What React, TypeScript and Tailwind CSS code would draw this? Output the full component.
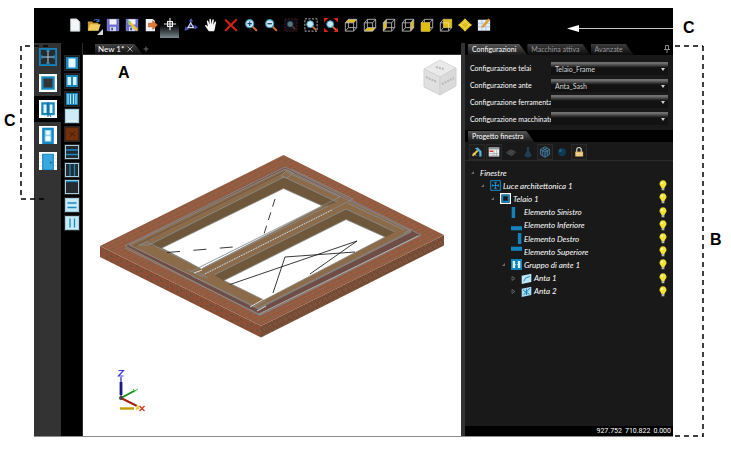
import React from "react";

type Kids = { children: React.ReactNode };

const Pic = ({ children, big = false }: Kids & { big?: boolean }) => (
  <svg viewBox="0 0 16 16" className={big ? "size-[18px]" : "size-[14px]"} aria-hidden="true">
    {children}
  </svg>
);

/* ---------- main toolbar drawings ---------- */

const Lens = () => (
  <>
    <path d="M9 9l5 5" stroke="#d9662a" strokeWidth="2.4" strokeLinecap="round" />
    <circle cx="6.5" cy="6.5" r="4.6" fill="#c4e9f7" stroke="#3d93b8" strokeWidth="1.3" />
  </>
);

const Floppy = () => (
  <>
    <path d="M1.500 1.500h13v13h-13z" fill="#6a6ad0" stroke="#8f8fe6" />
    <path d="M4 1.500h8v6H4z" fill="#f2f4fb" />
    <path d="M4.500 10h7v5h-7z" fill="#cfd4e8" />
    <path d="M6 11h2v3H6z" fill="#4a4aa8" />
  </>
);

const CubeLines = ({ children }: Kids) => (
  <>
    {children}
    <path
      d="M1.500 5.500h9.500v9.500H1.500zM5 1.500h9.500v9.500M5 1.500v9.500h9.500M1.500 5.500L5 1.500M11 5.500l3.500-4M11 15l3.500-4M1.500 15L5 11"
      fill="none"
      stroke="#b9b9b9"
      strokeWidth="1"
    />
  </>
);

const fileTools = [
  { name: "Nuovo", art: <path d="M3 1h7l3.500 3.500V15H3z" fill="#f4f6f8" stroke="#c3c8cc" /> },
  {
    name: "Apri",
    art: (
      <>
        <path d="M1 4h5l1 1.500h6V14H1z" fill="#c99a2c" />
        <path d="M3.500 7h12L13 14.500H1z" fill="#f3cf62" />
        <path d="M8 3c2-2 4-1.500 5 .5M13.500 1v3h-3" fill="none" stroke="#3c6fb5" strokeWidth="1.400" />
      </>
    ),
  },
  { name: "Salva", art: <Floppy /> },
  {
    name: "Salva con nome",
    art: (
      <>
        <Floppy />
        <path d="M5 5l9 9" stroke="#e8c52e" strokeWidth="3" />
        <path d="M3.500 3.500l2 2" stroke="#7fc77a" strokeWidth="3" />
      </>
    ),
  },
  {
    name: "Esporta",
    art: (
      <>
        <path d="M2 1h8l2.500 2.500V15H2z" fill="#eef1f5" />
        <path d="M5 6h5V3l5.500 5-5.500 5v-3H5z" fill="#e07a2f" stroke="#b9511a" strokeWidth=".7" />
      </>
    ),
  },
  {
    name: "Snap",
    art: (
      <g fill="none" stroke="#f0f0f0" strokeWidth="1.300">
        <path d="M8 1v14M1 8h14" />
        <rect x="5.200" y="5.200" width="5.600" height="5.600" />
      </g>
    ),
  },
];

const viewTools = [
  {
    name: "Orbita",
    art: (
      <>
        <path d="M8 8V2M8 8l-5 4.500M8 8l6 2" stroke="#3a3f96" strokeWidth="2" />
        <path d="M8 0l2.500 4h-5zM.5 14.500l1-5 4 3.500zM16 11l-4 2 .5-5z" fill="#4b51b5" />
        <path d="M7.500 5.500L11 11H4.500z" fill="none" stroke="#d8dcee" strokeWidth="1.300" />
      </>
    ),
  },
  {
    name: "Sposta vista",
    art: (
      <path
        d="M5.500 15L1.500 9.500c-.8-1.300.7-2 1.600-1L4.500 10 3.300 4c-.2-1.400 1.300-1.600 1.700-.3L6.300 7.500 6.200 2c0-1.400 1.700-1.400 1.800 0l.4 5.300L9.500 2.300c.3-1.300 1.900-1 1.700.4l-.6 5.200 1.700-3.200c.7-1.200 2-.5 1.500.8C12.700 8.500 13 12 11.500 15z"
        fill="#f7f7f7"
      />
    ),
  },
  { name: "Elimina", art: <path d="M2 2.500L14 14M14 2L2 14" stroke="#d8220f" strokeWidth="2.300" strokeLinecap="round" /> },
  {
    name: "Ingrandisci",
    art: (
      <>
        <Lens />
        <path d="M4 6.500h5M6.500 4v5" stroke="#1a4766" strokeWidth="1.300" />
      </>
    ),
  },
  {
    name: "Riduci",
    art: (
      <>
        <Lens />
        <path d="M4 6.500h5" stroke="#1a4766" strokeWidth="1.500" />
      </>
    ),
  },
  {
    name: "Zoom selezione",
    art: (
      <g opacity=".5">
        <rect x="1" y="1" width="14" height="14" fill="#141c33" stroke="#c03030" strokeDasharray="2 1.500" />
        <g transform="translate(2.500 2.500) scale(.7)">
          <Lens />
        </g>
      </g>
    ),
  },
  {
    name: "Zoom finestra",
    art: (
      <>
        <rect x="1" y="1" width="14" height="14" fill="none" stroke="#c9c9c9" strokeDasharray="2.500 1.500" />
        <g transform="translate(1.500 1.500) scale(.85)">
          <Lens />
        </g>
      </>
    ),
  },
  {
    name: "Adatta",
    art: (
      <>
        <path d="M0 0h5L0 5zM16 0v5l-5-5zM0 16v-5l5 5zM16 16h-5l5-5z" fill="#e3200f" />
        <g transform="translate(1.500 1.500) scale(.85)">
          <Lens />
        </g>
      </>
    ),
  },
];

const solidTools = [
  { name: "Vista alto", art: <CubeLines><path d="M1.500 5.500L5 1.500h9.500L11 5.500z" fill="#e0bd12" /></CubeLines> },
  { name: "Vista basso", art: <CubeLines><path d="M1.500 15L5 11h9.500L11 15z" fill="#e0bd12" /></CubeLines> },
  { name: "Vista sinistra", art: <CubeLines><path d="M1.500 5.500L5 1.500V11l-3.500 4z" fill="#e0bd12" /></CubeLines> },
  { name: "Vista destra", art: <CubeLines><path d="M11 5.500l3.500-4V11L11 15z" fill="#e0bd12" /></CubeLines> },
  {
    name: "Vista frontale",
    art: (
      <>
        <CubeLines><path d="M0 0" /></CubeLines>
        <path d="M1 5h10.500v10.500H1z" fill="#e0bd12" />
      </>
    ),
  },
  {
    name: "Vista retro",
    art: (
      <>
        <CubeLines><path d="M0 0" /></CubeLines>
        <path d="M5 1.500h9.500V11H5z" fill="#e0bd12" />
        <path d="M5 5.500h6V11" fill="none" stroke="#e9dfa8" />
      </>
    ),
  },
  {
    name: "Assonometria",
    art: (
      <>
        <path d="M8 .5L15.800 8 8 15.500.2 8z" fill="#e0bd12" />
        <path d="M8 4l4.500 4L8 12 3.500 8zM8 1v3M8 12v3M.5 8h3M12.500 8h3" fill="none" stroke="#f6e488" />
      </>
    ),
  },
  {
    name: "Disegno",
    art: (
      <>
        <path d="M1 2h14v12.500H1z" fill="#e6eff7" />
        <path d="M1 6h14M1 10h14M5.500 2v12M10 2v12" stroke="#a9c6dd" />
        <path d="M6 10.500L14 1.500" stroke="#e39b2d" strokeWidth="2.600" />
      </>
    ),
  },
];

/* ---------- object palette drawings ---------- */

const palette = [
  {
    name: "Luce architettonica",
    art: (
      <>
        <rect x=".8" y=".8" width="14.400" height="14.400" fill="#262b30" stroke="#1584bd" strokeWidth="1.600" />
        <path d="M8 2.500v11M2.500 8h11" stroke="#9fd0ea" strokeWidth=".9" />
        <path d="M6.500 2.500h3M6.500 13.500h3M2.500 6.500v3M13.500 6.500v3" stroke="#2b9bd3" />
      </>
    ),
  },
  {
    name: "Telaio",
    art: (
      <>
        <rect width="16" height="16" fill="#fff" />
        <rect x="3" y="3" width="10" height="10" fill="#333" stroke="#1788c2" strokeWidth="2" />
      </>
    ),
  },
  {
    name: "Ante",
    art: (
      <>
        <rect width="16" height="16" fill="#fff" />
        <path d="M2 2h12v11.500H2z" fill="#1788c2" />
        <path d="M4 4h2.700v7.500H4zM9.500 4H12v7.500H9.500z" fill="#e4f4fb" />
        <path d="M8 2v13M9.500 13l1 2" stroke="#0e5f8a" strokeWidth=".9" />
      </>
    ),
  },
  {
    name: "Porta vetrata",
    art: (
      <>
        <rect width="16" height="16" fill="#fff" />
        <path d="M2.800 1.500h10.400V16H2.800z" fill="#1788c2" />
        <path d="M5 3.500h6V14H5z" fill="#8fd0ee" />
        <circle cx="8" cy="6" r="2" fill="#eefaff" />
        <circle cx="8" cy="11" r="2.400" fill="#eefaff" />
      </>
    ),
  },
  {
    name: "Porta",
    art: (
      <>
        <rect width="16" height="16" fill="#fff" />
        <path d="M0 3h16M0 6h16M0 9h16M0 12h16" stroke="#dcdcdc" strokeWidth=".6" />
        <path d="M3.300 2h9.400V16H3.300z" fill="#37a9df" stroke="#1b82b8" />
        <path d="M10.500 8.500v2" stroke="#17618b" strokeWidth="1.200" />
      </>
    ),
  },
];

const Tile = ({ fill, d, stroke = "#1788c2" }: { fill: string; d: string; stroke?: string }) => (
  <svg viewBox="0 0 14 14" className="size-[14px]" aria-hidden="true">
    <rect x=".5" y=".5" width="13" height="13" fill={fill} stroke="#a7cfe2" />
    <path d={d} fill="none" stroke={stroke} strokeWidth="1.300" />
  </svg>
);

const variants = [
  {
    name: "Anta singola",
    art: (
      <svg viewBox="0 0 14 14" className="size-[14px]" aria-hidden="true">
        <path d="M1 1h12v12H1z" fill="#1788c2" />
        <path d="M3.500 2.500h7v9h-7z" fill="#e8f7fd" />
      </svg>
    ),
  },
  {
    name: "Due ante",
    art: (
      <svg viewBox="0 0 14 14" className="size-[14px]" aria-hidden="true">
        <path d="M1 1h12v12H1z" fill="#1788c2" />
        <path d="M2.500 3H6v8H2.500zM8 3h3.500v8H8z" fill="#d9f1fb" />
      </svg>
    ),
  },
  {
    name: "Tre ante",
    art: (
      <svg viewBox="0 0 14 14" className="size-[14px]" aria-hidden="true">
        <path d="M1 1h12v12H1z" fill="#1788c2" />
        <path d="M3 2v10M5.500 2v10M8.500 2v10M11 2v10" stroke="#bfe4f4" strokeWidth="1.100" />
      </svg>
    ),
  },
  { name: "Vetro", art: <Tile fill="#cdeaf7" d="M2 12h10" stroke="#e9f7fd" /> },
  {
    name: "Pannello",
    art: (
      <svg viewBox="0 0 14 14" className="size-[14px]" aria-hidden="true">
        <path d="M.5 .5h13v13H.5z" fill="#73300c" stroke="#4d2410" />
        <path d="M4 5l3 2 3-2M5 10l2-3 3 2" stroke="#3f1a08" fill="none" strokeWidth=".8" />
      </svg>
    ),
  },
  { name: "Traverso", art: <Tile fill="#262b30" d="M1 5h12M1 9.500h12" /> },
  { name: "Montante", art: <Tile fill="#262b30" d="M5 1v12M9.500 1v12" /> },
  { name: "Soglia", art: <Tile fill="#262b30" d="M1 1.500h12" /> },
  { name: "Inglesina orizzontale", art: <Tile fill="#c8eaf8" d="M2.500 5h9M2.500 9.500h9" /> },
  { name: "Inglesina verticale", art: <Tile fill="#c8eaf8" d="M5 2.500v9M9.500 2.500v9" /> },
];

/* ---------- viewport scene ---------- */

const Scene = () => (
  <svg viewBox="83 55 378 381" className="block h-[381px] w-[378px]" role="img" aria-label="Modello finestra">
    <defs>
      <pattern id="brick" width="12" height="8" patternUnits="userSpaceOnUse" patternTransform="skewY(-26)">
        <rect width="12" height="8" fill="#905d40" />
        <path d="M0 1h4M7 3h4M2 5h4M8 7h3" stroke="#a0503d" strokeWidth="1.600" />
        <path d="M5 1h4M1 3h3M8 5h4M2 7h4" stroke="#835a42" strokeWidth="1.200" />
        <path d="M0 2h12M0 6h12" stroke="#9b7052" strokeWidth=".5" />
      </pattern>
      <pattern id="sideLeft" width="10" height="6" patternUnits="userSpaceOnUse" patternTransform="skewY(26)">
        <rect width="10" height="6" fill="#86553a" />
        <path d="M0 1h5M4 4h5" stroke="#944935" strokeWidth="1.800" />
        <path d="M6 1h3M0 4h3" stroke="#704a32" strokeWidth="1.600" />
      </pattern>
      <pattern id="sideRight" width="5" height="6" patternUnits="userSpaceOnUse" patternTransform="skewY(-26)">
        <rect width="5" height="6" fill="#764b35" />
        <path d="M0 0l3 5M3 0l2 4" stroke="#8a6247" strokeWidth=".8" />
        <path d="M2 0l2 5" stroke="#643f2d" strokeWidth=".8" />
      </pattern>
    </defs>
    <path d="M100 246l161 80v11.500L100 257z" fill="url(#sideLeft)" />
    <path d="M261 326l183-91v10.500l-183 92z" fill="url(#sideRight)" />
    <path d="M100 246L283.500 155 444 235 261 326z" fill="url(#brick)" />
    <path d="M125 246L285 167l136 68-161 80.500z" fill="#6f4c44" stroke="#8b8a8c" strokeWidth=".9" />
    <path d="M129 245L285 169l126 62-153 77z" fill="#8b6b49" stroke="#8c8c8e" strokeWidth=".9" />
    <path d="M134 246L285 171.500" stroke="#6a5746" strokeWidth="1" />
    <path d="M149 245L284 177l53 25-15 5-39-18.500L162 248z" fill="#6f573c" />
    <path d="M214 275L346 209l49 23-10 5.500-39-18L224 281z" fill="#6f573c" />
    <path d="M162 248l121.500-59.500L322.500 206l-121 63z" fill="#fff" stroke="#8a8a88" strokeWidth=".8" />
    <path d="M224 280.500l122-61L385 237l-121 63z" fill="#fff" stroke="#8a8a88" strokeWidth=".8" />
    <g fill="none" stroke="#898a8c" strokeWidth=".9">
      <path d="M149 245L284 177l53 25M149 245l-10 0 8-3 45 22M287 172l53 25-150 75M291 169l62 30-151 76M214 275L346 209l49 23M348 203l56 27M192 276l66 33L411 232M196 271l12 7M187 269l16 8M255 306l10-5M404 233l8-4M281 176l6-6 6 3-6 5z" />
      <path d="M125 248l135 66.500L420 235" />
      <path d="M203 268L328 206" />
    </g>
    <path d="M205 274L332 210" stroke="#d8d8d8" strokeWidth="1" strokeDasharray="1.500 1.200" />
    <path d="M259 314L418 236" stroke="#c4c4c4" strokeWidth=".7" />
    <path d="M194 273l8-3M250 307l14-8M257 311l9-5" stroke="#e8e8e8" strokeWidth=".9" />
    <g fill="none" stroke="#222" strokeWidth=".9">
      <path d="M275 199l-11 35" strokeDasharray="8 6" />
      <path d="M167 252.500L233 247" strokeDasharray="13 13.500" />
      <path d="M230 284.500L357 241l-47 33M273 293l12-36 70-5" />
    </g>
    {/* view cube */}
    <path d="M424 69l16-9 16 8-16 9z" fill="#eaeaea" stroke="#d9d9d9" />
    <path d="M424 69l16 8v18l-16-8z" fill="#e0e0e0" stroke="#d2d2d2" />
    <path d="M456 68l-16 9v18l16-9z" fill="#dadada" stroke="#d0d0d0" />
    <path d="M436 67l8 2M426 77l11 5M442 84l12-6" stroke="#bababa" strokeWidth="2" strokeDasharray="2 1" />
    {/* axis tripod */}
    <path d="M121 377v20" stroke="#2222b8" strokeWidth="1.200" />
    <path d="M121 382v13" stroke="#17178c" strokeWidth="2.800" />
    <path d="M121 398l13-7" stroke="#128a1a" strokeWidth="1.800" />
    <path d="M121 398l16 8" stroke="#a3210e" strokeWidth="2" />
    <path d="M120 408.500h14" stroke="#c29d0c" strokeWidth="2.400" />
    <circle cx="121" cy="398" r="2" fill="#444" />
    <path d="M118.500 370.500h5l-5 5.500h5" fill="none" stroke="#3d3dd6" strokeWidth="1.200" />
    <path d="M133 389l2 2 3-2M135 391l-1 1.500" fill="none" stroke="#35c43b" />
    <path d="M136 406l3 3M139 406l-3 3.500" stroke="#e8c41d" strokeWidth="1.200" />
    <path d="M139.500 406l5 5M144.500 406l-5 5" stroke="#d43a1c" strokeWidth="1.300" />
  </svg>
);

/* ---------- side panel ---------- */

const TabShape = ({ children, active = false }: Kids & { active?: boolean }) => (
  <button
    className={
      active
        ? "h-[11px] bg-linear-to-b from-[#555555] to-[#191919] pr-[11px] pl-[4px] text-[7px] leading-[11px] whitespace-nowrap text-white [clip-path:polygon(0_0,calc(100%-8px)_0,100%_100%,0_100%)]"
        : "h-[11px] bg-linear-to-b from-[#3c3c3c] to-[#0c0c0c] pr-[11px] pl-[4px] text-[7px] leading-[11px] whitespace-nowrap text-[#9a9a9a] [clip-path:polygon(0_0,calc(100%-8px)_0,100%_100%,0_100%)]"
    }
  >
    {children}
  </button>
);

const configs = [
  { id: "telai", label: "Configurazione telai", value: "Telaio_Frame" },
  { id: "ante", label: "Configurazione ante", value: "Anta_Sash" },
  { id: "ferramenta", label: "Configurazione ferramenta", value: "" },
  { id: "macchinate", label: "Configurazione macchinate", value: "" },
];

const projectTools = [
  {
    name: "Modifica",
    framed: true,
    art: (
      <>
        <path d="M2 13L9 6" stroke="#e6c34a" strokeWidth="2.600" />
        <path d="M5 3l4-1 5 5v7h-3V8L8 5z" fill="#58b3dd" />
        <path d="M3 9l4 4" stroke="#fff" />
      </>
    ),
  },
  {
    name: "Tabella",
    framed: true,
    art: (
      <>
        <path d="M1 2h14v12H1z" fill="#f1f1f1" />
        <path d="M1 2h14v2.500H1z" fill="#8f979c" />
        <path d="M2 7h5" stroke="#d8402c" strokeWidth="2" />
        <path d="M2 10h12M2 12.500h12M8 5v9M11.500 5v9" stroke="#8f979d" strokeWidth=".8" />
      </>
    ),
  },
  { name: "Piano", framed: false, art: <path d="M2 9l5-4 7 3-5 5zM5 7l6 4M11 6l-6 5" fill="#3a3d3f" stroke="#4d5255" /> },
  { name: "Utensile", framed: false, art: <path d="M7 2h2v5l3 5c0 3-8 3-8 0l3-5z" fill="#1d3d52" stroke="#274a60" /> },
  {
    name: "Solido",
    framed: true,
    art: <path d="M8 1l6 3.500v7L8 15l-6-3.500v-7zM2 4.500L8 8l6-3.500M8 8v7M5 3l6 3.500v6M11 3L5 6.500v6" fill="#17364a" stroke="#5b93b5" strokeWidth=".9" />,
  },
  {
    name: "Sfera",
    framed: false,
    art: (
      <>
        <circle cx="8" cy="8" r="5.500" fill="#0f3853" />
        <circle cx="6" cy="6" r="2" fill="#2b5c7b" />
      </>
    ),
  },
  {
    name: "Blocca",
    framed: true,
    art: (
      <>
        <path d="M5 8V5c0-4 6-4 6 0v3" fill="none" stroke="#d6d2c6" strokeWidth="1.600" />
        <path d="M3 7.500h10.500V14H3z" fill="#e6bd6a" />
        <path d="M4 10h8M4 12.500h8" stroke="#f7e3b4" />
      </>
    ),
  },
];

const treeArt = {
  opening: <path d="M1 1h14v14H1zM8 3.500v9M3.500 8h9M6 4h4M6 12h4M4 6v4M12 6v4" fill="none" stroke="#1f92cc" strokeWidth="1.400" />,
  frame: (
    <>
      <path d="M1 1h14v14H1z" fill="#191919" stroke="#fff" strokeWidth="2" />
      <path d="M3.500 3.500h9v9h-9z" fill="none" stroke="#1283bd" strokeWidth="2.400" />
    </>
  ),
  left: <path d="M1 0h5v16H1z" fill="#1283bd" />,
  bottom: <path d="M0 9h16v6H0z" fill="#1283bd" />,
  right: <path d="M10 0h5v16h-5z" fill="#1283bd" />,
  top: <path d="M0 1h16v6H0z" fill="#1283bd" />,
  group: (
    <>
      <path d="M0 0h16v16H0z" fill="#1283bd" />
      <path d="M2.500 3H6v10H2.500zM10 3h3.500v10H10z" fill="#dff3fb" />
      <path d="M6 8h1M9 8h1" stroke="#dff3fb" strokeWidth="1.500" />
    </>
  ),
  sash: (
    <>
      <path d="M1 4l14-3v12L1 16z" fill="#bfe6f6" />
      <path d="M4 12l3-5 6-2" fill="none" stroke="#1788c2" strokeWidth="1.400" />
    </>
  ),
  sashTilt: (
    <>
      <path d="M1 4l14-3v12L1 16z" fill="#a9dcf2" />
      <path d="M3 6l9 6M13 3L4 13M8 4v9" fill="none" stroke="#1078b0" strokeWidth="1.300" />
    </>
  ),
};

type TreeRow = {
  label: string;
  indent: string;
  art?: React.ReactNode;
  arrow: "open" | "closed" | "none";
};

const tree: TreeRow[] = [
  { label: "Finestre", indent: "pl-[5px]", arrow: "open" },
  { label: "Luce architettonica 1", indent: "pl-[15px]", arrow: "open", art: treeArt.opening },
  { label: "Telaio 1", indent: "pl-[25px]", arrow: "open", art: treeArt.frame },
  { label: "Elemento Sinistro", indent: "pl-[36px]", arrow: "none", art: treeArt.left },
  { label: "Elemento Inferiore", indent: "pl-[36px]", arrow: "none", art: treeArt.bottom },
  { label: "Elemento Destro", indent: "pl-[36px]", arrow: "none", art: treeArt.right },
  { label: "Elemento Superiore", indent: "pl-[36px]", arrow: "none", art: treeArt.top },
  { label: "Gruppo di ante 1", indent: "pl-[36px]", arrow: "open", art: treeArt.group },
  { label: "Anta 1", indent: "pl-[46px]", arrow: "closed", art: treeArt.sash },
  { label: "Anta 2", indent: "pl-[46px]", arrow: "closed", art: treeArt.sashTilt },
];

const Bulb = () => (
  <svg viewBox="0 0 8 11" className="h-[11px] w-[8px]" aria-hidden="true">
    <path d="M4 .3a3.500 3.500 0 0 1 2.200 6.200L5.500 8h-3l-.7-1.500A3.500 3.500 0 0 1 4 .3z" fill="#f1e331" />
    <path d="M2.600 8h2.800v2.300H2.600z" fill="#b5b5a2" />
    <circle cx="3" cy="3" r="1" fill="#fdfbc0" />
  </svg>
);

const ToolButton = ({ name, children, wide = false, active = false }: Kids & { name: string; wide?: boolean; active?: boolean }) => (
  <button
    aria-label={name}
    className={
      active
        ? "flex h-[22px] w-[19px] items-start justify-center bg-linear-to-b from-black from-25% to-[#7b8a91] pt-px"
        : wide
          ? "flex h-[18px] w-5 items-center justify-center"
          : "flex h-[18px] w-[19px] items-center justify-center"
    }
  >
    <Pic>{children}</Pic>
  </button>
);

const Note = ({ children, place }: Kids & { place: string }) => (
  <span className={`absolute text-[16px] leading-[18px] font-bold text-black ${place}`}>{children}</span>
);

export default function App() {
  return (
    <div className="flex h-screen bg-white pt-2 pb-3 font-['Liberation_Sans',sans-serif]">
      {/* left callout */}
      <aside className="relative w-[34px] shrink-0">
        <Note place="left-[4px] top-[104px]">C</Note>
        <svg className="absolute top-[37px] left-[20px] z-10 h-[155px] w-[28px]" aria-hidden="true">
          <path d="M28 1H1v153h27" fill="none" stroke="#000" strokeWidth="1.500" strokeDasharray="5 4" />
        </svg>
      </aside>

      <main className="flex min-w-0 flex-1 flex-col border-b border-[#8c8c8c] bg-black font-['Lato',sans-serif]">
        <header className="flex h-[35px] shrink-0 items-start pt-[8px] pl-[31px]">
          <div className="flex" role="toolbar" aria-label="File">
            {fileTools.map((t) => (
              <div key={t.name} className="relative">
                <ToolButton name={t.name} active={t.name === "Snap"}>
                  {t.art}
                </ToolButton>
                {t.name === "Apri" && (
                  <svg viewBox="0 0 6 6" className="absolute top-[13px] right-0 size-[6px]" aria-hidden="true">
                    <path d="M6 0v6H0z" fill="#d5d5d5" />
                  </svg>
                )}
              </div>
            ))}
          </div>
          <div className="ml-[2px] flex" role="toolbar" aria-label="Vista">
            {viewTools.map((t) => (
              <ToolButton key={t.name} name={t.name} wide>
                {t.art}
              </ToolButton>
            ))}
          </div>
          <div className="flex" role="toolbar" aria-label="Orientamento">
            {solidTools.map((t) => (
              <ToolButton key={t.name} name={t.name}>
                {t.art}
              </ToolButton>
            ))}
          </div>
          <svg viewBox="0 0 106 8" className="mt-[8px] ml-auto h-[8px] w-[106px]" aria-hidden="true">
            <path d="M0 4.500L12 1v7z" fill="#fff" />
            <path d="M12 4.500h94" stroke="#c8c8c8" />
          </svg>
        </header>

        <div className="flex min-h-0 flex-1">
          <nav className="flex w-[27px] shrink-0 flex-col bg-[#333333] pt-px" aria-label="Oggetti">
            {palette.map((p) => (
              <button
                key={p.name}
                aria-label={p.name}
                className={
                  p.name === "Ante"
                    ? "flex h-[26px] items-center justify-center bg-black"
                    : "flex h-[26px] items-center justify-center"
                }
              >
                <Pic big>{p.art}</Pic>
              </button>
            ))}
          </nav>

          <nav className="w-[22px] shrink-0 border-r border-[#2a2a2a] pt-[12px]" aria-label="Varianti">
            <div className="flex h-[176px] flex-col items-center justify-between">
              {variants.map((v) => (
                <button key={v.name} aria-label={v.name} className="flex size-4 items-center justify-center border border-[#262626] bg-[#1c1c1c]">
                  {v.art}
                </button>
              ))}
            </div>
          </nav>

          <section className="flex min-w-0 flex-1 flex-col">
            <div className="flex h-[12px] shrink-0 items-end border-b border-[#333333] pl-[12px]">
              <button className="flex h-[10px] items-center gap-[3px] bg-linear-to-b from-[#444444] to-[#111111] pr-[9px] pl-[3px] text-[8px] leading-[10px] text-white [clip-path:polygon(0_0,calc(100%-8px)_0,100%_100%,0_100%)]">
                New 1*
                <svg viewBox="0 0 6 6" className="size-[6px]" aria-hidden="true">
                  <path d="M.5 .5l5 5M5.500 .5l-5 5" stroke="#a5a5a5" />
                </svg>
              </button>
              <button aria-label="Nuova scheda" className="ml-px flex size-[10px] items-center">
                <svg viewBox="0 0 6 6" className="size-[6px]" aria-hidden="true">
                  <path d="M3 .5v5M.5 3h5" stroke="#6a6a6a" />
                </svg>
              </button>
            </div>
            <div className="relative min-h-0 flex-1 overflow-hidden bg-white font-['Liberation_Sans',sans-serif]">
              <Scene />
              <Note place="left-[35px] top-[9px]">A</Note>
            </div>
          </section>

          <aside className="flex w-[212px] shrink-0 flex-col border-l-4 border-[#333333] bg-[#191919] text-white">
            <div className="flex h-[12px] shrink-0 items-end bg-black pl-[3px]">
              <TabShape active>Configurazioni</TabShape>
              <TabShape>Macchina attiva</TabShape>
              <TabShape>Avanzate</TabShape>
              <button aria-label="Blocca pannello" className="mr-[3px] mb-[2px] ml-auto">
                <svg viewBox="0 0 6 8" className="h-[8px] w-[6px]" aria-hidden="true">
                  <path d="M1.500 .5h3v4h-3zM0 4.500h6M3 4.500V8" fill="none" stroke="#8a8a8a" />
                </svg>
              </button>
            </div>

            <div className="grid h-[75px] shrink-0 grid-rows-4 pt-[5px] pr-[5px] pb-[3px] pl-[5px]">
              {configs.map((c) => (
                <div key={c.id} className="flex items-center">
                  <label htmlFor={c.id} className="w-[81px] shrink-0 text-[7px] leading-[10px] whitespace-nowrap">
                    {c.label}
                  </label>
                  <span className="relative flex-1">
                    <select
                      id={c.id}
                      defaultValue={c.value}
                      className="block h-[13px] w-full appearance-none bg-[#121212] bg-linear-to-b from-[#707070] from-10% to-[#121212] to-45% pt-[2px] pl-[4px] text-[7px] leading-[11px] text-[#d8d8d8]"
                    >
                      <option value={c.value}>{c.value}</option>
                    </select>
                    <svg viewBox="0 0 4 3" className="pointer-events-none absolute top-[6px] right-[3px] h-[3px] w-[4px]" aria-hidden="true">
                      <path d="M0 0h4L2 3z" fill="#d0d0d0" />
                    </svg>
                  </span>
                </div>
              ))}
            </div>

            <div className="flex h-[12px] shrink-0 items-end bg-black pl-[3px]">
              <TabShape active>Progetto finestra</TabShape>
            </div>

            <div className="flex h-[19px] shrink-0 items-center border-b border-[#2b2b2b] pt-px pl-[4px]" role="toolbar" aria-label="Progetto">
              {projectTools.map((t) => (
                <button
                  key={t.name}
                  aria-label={t.name}
                  className={
                    t.framed
                      ? "mr-px flex size-4 items-center justify-center border border-[#2a2a2a] bg-[#1d1d1d]"
                      : "mr-px flex size-4 items-center justify-center"
                  }
                >
                  <svg viewBox="0 0 16 16" className="size-[12px]" aria-hidden="true">
                    {t.art}
                  </svg>
                </button>
              ))}
            </div>

            <ul className="mt-[5px] grid h-[132px] shrink-0 grid-rows-10">
              {tree.map((r) => (
                <li key={r.label} className={`flex items-center pr-[6px] ${r.indent}`}>
                  <svg viewBox="0 0 5 5" className="mr-[5px] size-[5px] shrink-0" aria-hidden="true">
                    {r.arrow === "open" && <path d="M4 1v3H1z" fill="#6d6d6d" />}
                    {r.arrow === "closed" && <path d="M1 .5l3 2-3 2z" fill="none" stroke="#6d6d6d" strokeWidth=".8" />}
                  </svg>
                  {r.art && (
                    <svg viewBox="0 0 16 16" className="mr-[2px] size-[11px] shrink-0" aria-hidden="true">
                      {r.art}
                    </svg>
                  )}
                  <span className="text-[8px] leading-[12px] whitespace-nowrap italic">{r.label}</span>
                  {r.label !== "Finestre" && (
                    <button aria-label={`Visibilità ${r.label}`} className="ml-auto">
                      <Bulb />
                    </button>
                  )}
                </li>
              ))}
            </ul>

            <footer className="mt-auto flex h-[10px] shrink-0 items-center justify-end gap-[3px] bg-black pr-[2px] font-['Roboto',sans-serif] text-[7px] leading-[10px]">
              <span>927.752</span>
              <span>710.822</span>
              <span>0.000</span>
            </footer>
          </aside>
        </div>
      </main>

      {/* right callouts */}
      <aside className="relative w-[58px] shrink-0">
        <Note place="left-[10px] top-[11px]">C</Note>
        <Note place="left-[37px] top-[223px]">B</Note>
        <div className="absolute top-[37px] right-[27px] bottom-0 w-[29px]">
          <svg className="size-full" aria-hidden="true">
            <g stroke="#000" strokeWidth="1.500" strokeDasharray="5 4">
              <line x1="0" y1="1" x2="28" y2="1" />
              <line x1="28" y1="1" x2="28" y2="100%" />
              <line x1="0" y1="391" x2="28" y2="391" />
            </g>
          </svg>
        </div>
      </aside>
    </div>
  );
}
